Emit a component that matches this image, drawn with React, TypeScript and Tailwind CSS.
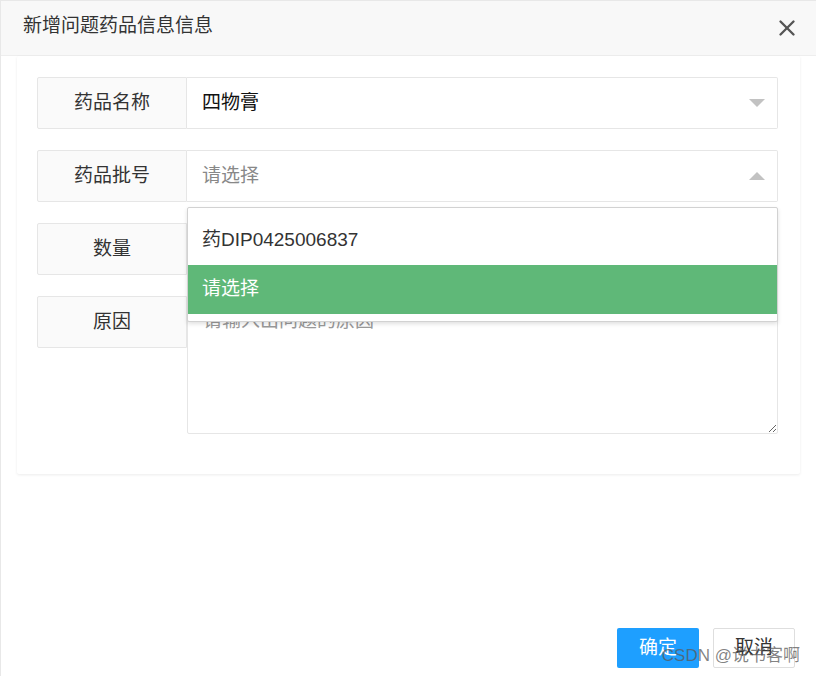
import { X } from "lucide-react";

const font = "font-['Liberation_Sans','Noto_Sans_CJK_SC',sans-serif]";

const Caret = ({ up }: { up?: boolean }) => (
  <svg width="16" height="8" viewBox="0 0 16 8" className="shrink-0">
    {up ? <polygon points="0,8 16,8 8,0" fill="#c2c2c2" /> : <polygon points="0,0 16,0 8,8" fill="#c2c2c2" />}
  </svg>
);

const Label = ({ text }: { text: string }) => (
  <div className="w-[150px] shrink-0 bg-[#fafafa] border border-[#e6e6e6] rounded-l-[2px] flex items-center justify-center text-[19px] text-[#333]">
    {text}
  </div>
);

export default function App() {
  return (
    <div className={`${font} relative w-[816px] h-[676px] bg-white border-l border-t border-[#e8e8e8] flex flex-col overflow-hidden`}>
      {/* header */}
      <div className="h-[55px] shrink-0 bg-[#f8f8f8] border-b border-[#eee] flex items-center justify-between pl-[22px] pr-[16px]">
        <span className="text-[19px] text-[#333] -mt-[3px]">新增问题药品信息信息</span>
        <X size={26} strokeWidth={2.2} className="text-[#555]" />
      </div>

      {/* form card */}
      <div className="mx-[16px] w-[783px] h-[418px] bg-white shadow-[0_1px_3px_rgba(0,0,0,0.08)] rounded-[2px] pt-[21px] pl-[20px] pr-[22px] flex flex-col gap-[21px]">
        <div className="flex h-[52px]">
          <Label text="药品名称" />
          <div className="flex-1 border border-l-0 border-[#e6e6e6] rounded-r-[2px] flex items-center justify-between pl-[15px] pr-[12px] text-[19px] text-[#111]">
            <span>四物膏</span>
            <Caret />
          </div>
        </div>

        <div className="relative flex h-[52px]">
          <Label text="药品批号" />
          <div className="flex-1 border border-l-0 border-[#e6e6e6] rounded-r-[2px] flex items-center justify-between pl-[15px] pr-[12px] text-[19px] text-[#888]">
            <span>请选择</span>
            <Caret up />
          </div>
          {/* open dropdown */}
          <div className="absolute z-10 left-[150px] right-0 top-[57px] bg-white border border-[#d2d2d2] rounded-[2px] shadow-[0_2px_4px_rgba(0,0,0,0.12)] py-[7px]">
            <div className="h-[50px] flex items-center pl-[14px] text-[19px] text-[#333]">药DIP0425006837</div>
            <div className="h-[49px] flex items-center pl-[14px] text-[19px] text-white bg-[#5fb878]">请选择</div>
          </div>
        </div>

        <div className="flex h-[52px]">
          <Label text="数量" />
          <div className="flex-1 border border-l-0 border-[#e6e6e6] rounded-r-[2px]" />
        </div>

        <div className="flex h-[138px] items-start">
          <div className="h-[52px] flex">
            <Label text="原因" />
          </div>
          <textarea
            className="flex-1 h-[138px] border border-[#e6e6e6] rounded-[2px] px-[15px] pt-[10px] text-[19px] text-[#333] placeholder:text-[#999] outline-none"
            placeholder="请输入出问题的原因"
          />
        </div>
      </div>

      {/* footer buttons */}
      <div className="mt-auto mb-[8px] flex justify-end gap-[14px] pr-[21px]">
        <button className="w-[82px] h-[40px] rounded-[2px] bg-[#1e9fff] text-white text-[19px]">确定</button>
        <button className="w-[82px] h-[40px] rounded-[2px] bg-white border border-[#dedede] text-[#333] text-[19px]">取消</button>
      </div>

      {/* watermark */}
      <span className="absolute right-[16px] bottom-[8px] text-[17px] text-[rgba(90,90,90,0.75)] pointer-events-none">
        CSDN @说书客啊
      </span>
    </div>
  );
}
